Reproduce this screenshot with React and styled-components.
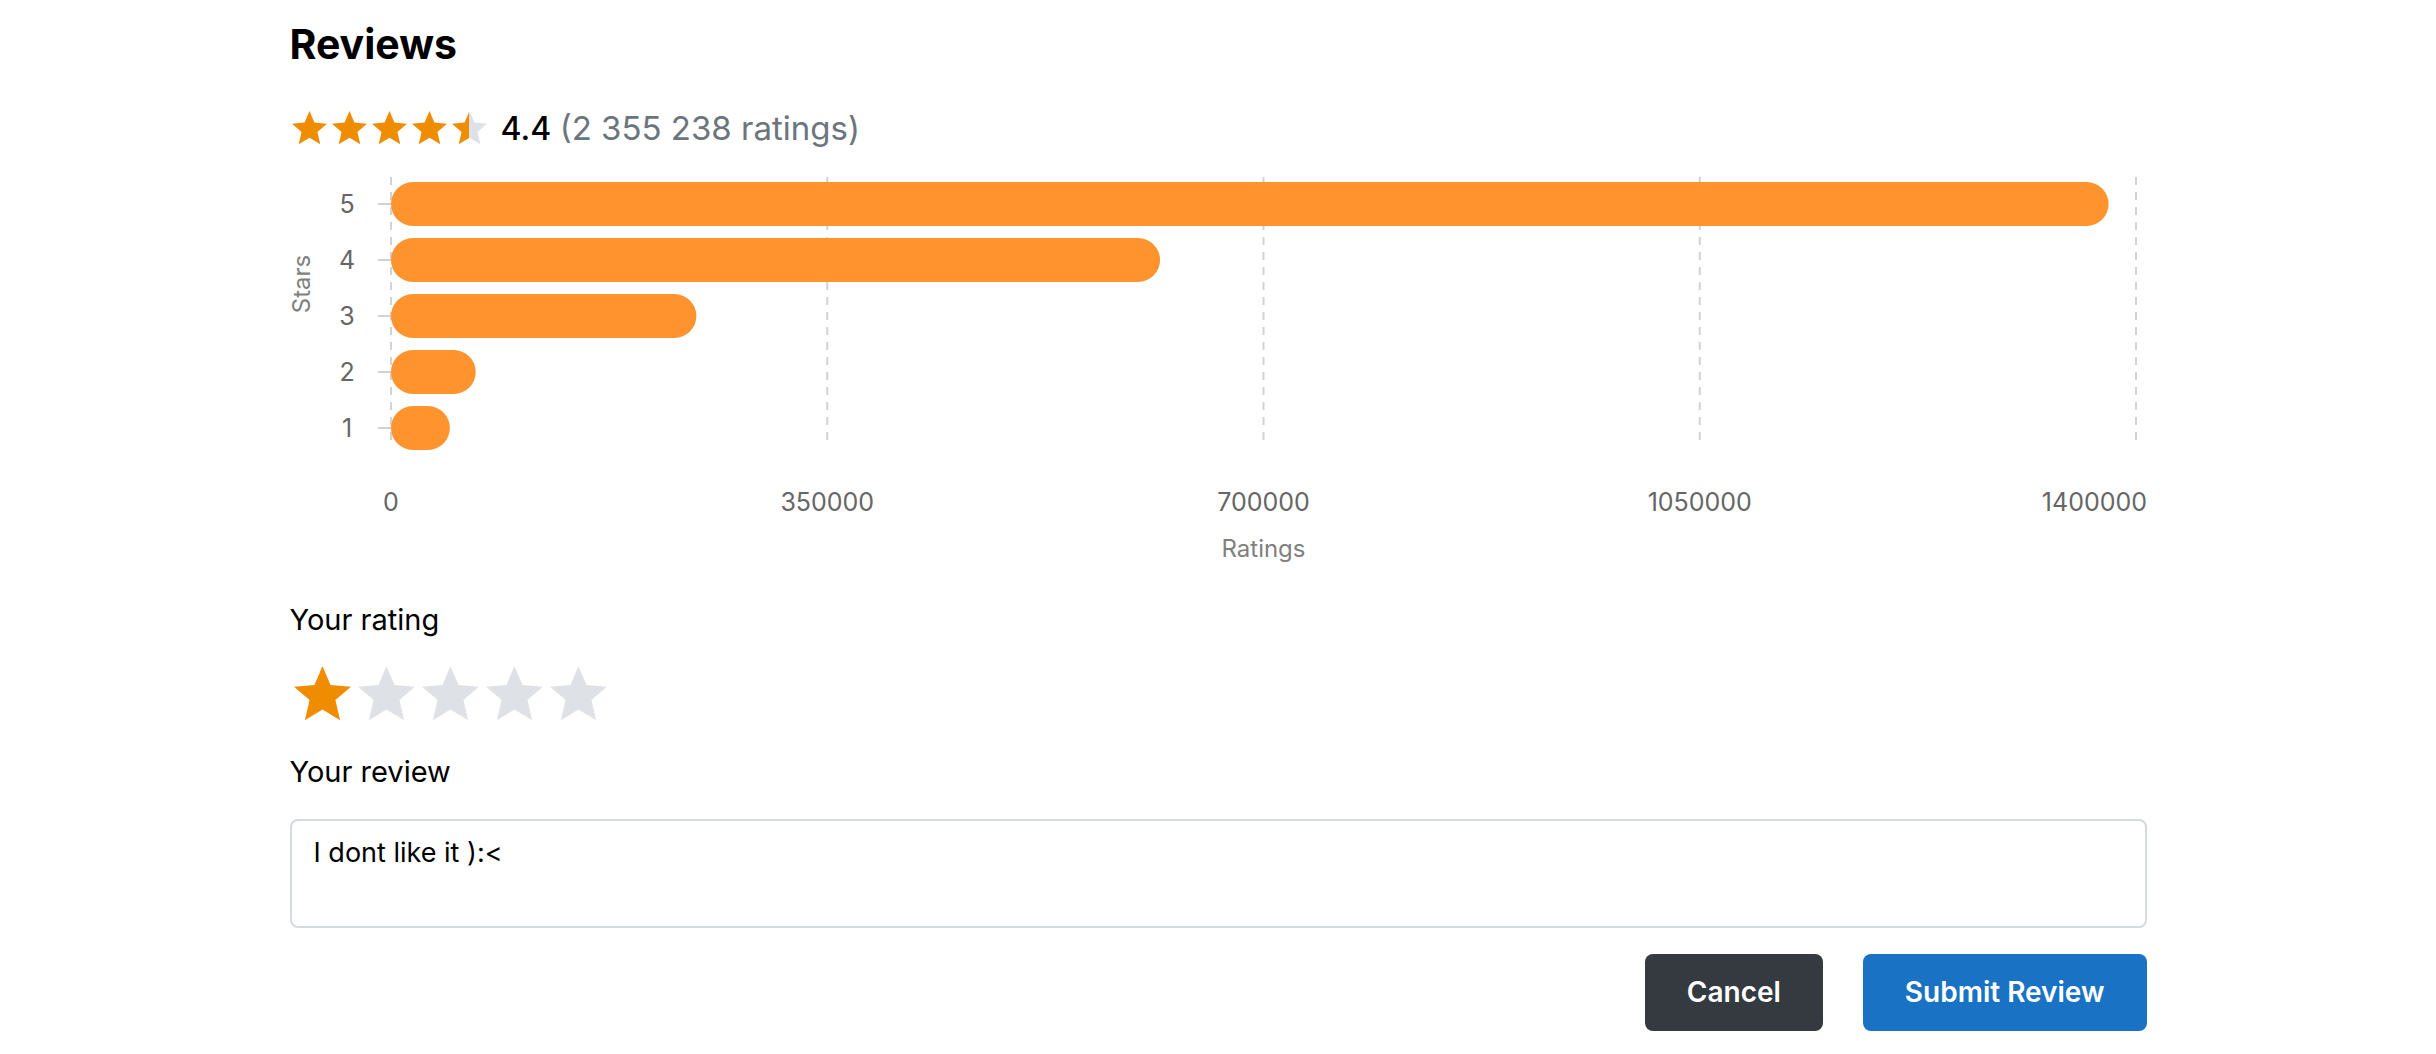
import React from "react";
import styled, { createGlobalStyle } from "styled-components";

// Reviews block: summary, distribution chart, and the review form

const ON = "#f08c00";
const OFF = "#dee2e6";
const BAR = "#ff942e";
const STAR_PATH =
  "M12 17.27L18.18 21l-1.64-7.03L22 9.24l-7.19-.61L12 2 9.19 8.63 2 9.24l5.46 4.73L5.82 21z";

const ratings = [
  { stars: 5, count: 1378000 },
  { stars: 4, count: 617000 },
  { stars: 3, count: 245000 },
  { stars: 2, count: 68000 },
  { stars: 1, count: 47238 },
];

const GlobalStyle = createGlobalStyle`
  body {
    margin: 0;
    background: #fff;
    color: #000;
    font-family: Inter, "Open Sans", sans-serif;
  }
`;

const Page = styled.section`
  width: 1857px;
  margin: 0 auto;
  padding-top: 20px;
  display: flex;
  flex-direction: column;
`;

const Title = styled.h2`
  margin: 0;
  font-size: 41px;
  line-height: 48px;
  font-weight: 700;
`;

const Summary = styled.div`
  display: flex;
  align-items: center;
  height: 40px;
  margin-top: 40px;
  gap: 14px;
`;

const StarRow = styled.div`
  display: flex;
  align-items: center;
  gap: ${(p) => p.$gap}px;
  margin-top: ${(p) => p.$top || 0}px;
  padding-left: ${(p) => p.$indent || 0}px;
`;

const Score = styled.span`
  font-size: 32px;
  font-weight: 500;
  line-height: 40px;
`;

const Count = styled.span`
  font-size: 33px;
  line-height: 40px;
  color: #6c757d;
  margin-left: 4px;
`;

const ChartSvg = styled.svg`
  display: block;
  overflow: visible;
  font-family: Inter, "Open Sans", sans-serif;

  .grid {
    stroke: #cfd3d8;
    stroke-width: 2;
    stroke-dasharray: 8 7;
  }
  .tick {
    stroke: #cfd3d8;
    stroke-width: 2;
  }
  .label {
    fill: #666;
    font-size: 25px;
  }
  .title {
    fill: #808080;
    font-size: 24px;
  }
`;

const Label = styled.div`
  font-size: 29px;
  line-height: 40px;
  margin-top: ${(p) => p.$top}px;
`;

const ReviewBox = styled.textarea`
  box-sizing: border-box;
  margin-top: 27px;
  width: 100%;
  height: 109px;
  padding: 12px 22px;
  border: 2px solid #d6dade;
  border-radius: 8px;
  font-family: Inter, "Open Sans", sans-serif;
  font-size: 27px;
  line-height: 40px;
  color: #000;
  resize: none;
  outline: none;
`;

const Actions = styled.div`
  display: flex;
  justify-content: flex-end;
  gap: 40px;
  margin-top: 26px;
`;

const Button = styled.button`
  height: 77px;
  padding: 0 42px;
  border: none;
  border-radius: 8px;
  background: ${(p) => (p.$primary ? "#1a72c4" : "#343a40")};
  color: #fff;
  font-family: Inter, "Open Sans", sans-serif;
  font-size: 28px;
  font-weight: 600;
  cursor: pointer;
`;

function Star({ width, fill, id }) {
  const partial = fill > 0 && fill < 1;
  const color = partial ? `url(#${id})` : fill >= 1 ? ON : OFF;
  return (
    <svg width={width} height={(width * 19.27) / 20} viewBox="2 2 20 19.27">
      {partial && (
        <defs>
          <linearGradient id={id}>
            <stop offset={fill} stopColor={ON} />
            <stop offset={fill} stopColor={OFF} />
          </linearGradient>
        </defs>
      )}
      <path d={STAR_PATH} fill={color} />
    </svg>
  );
}

function Stars({ value, width, gap, top, indent, name }) {
  return (
    <StarRow $gap={gap} $top={top} $indent={indent}>
      {[0, 1, 2, 3, 4].map((i) => (
        <Star
          key={i}
          width={width}
          id={`${name}-${i}`}
          fill={Math.max(0, Math.min(1, value - i))}
        />
      ))}
    </StarRow>
  );
}

function Chart() {
  const x0 = 101;
  const width = 1857;
  const max = 1400000;
  const span = 1745;
  const ticks = [0, 350000, 700000, 1050000, 1400000];
  const xOf = (v) => x0 + (v / max) * span;

  return (
    <ChartSvg width={width} height="422">
      {ticks.map((t) => (
        <line key={t} className="grid" x1={xOf(t)} x2={xOf(t)} y1="29" y2="299" />
      ))}
      {ratings.map((r, i) => {
        const cy = 56 + i * 56;
        return (
          <g key={r.stars}>
            <line className="tick" x1="88" x2={x0} y1={cy} y2={cy} />
            <text className="label" x="57" y={cy} textAnchor="middle" dominantBaseline="central">
              {r.stars}
            </text>
            <rect x={x0} y={cy - 22} height="44" width={xOf(r.count) - x0} rx="22" fill={BAR} />
          </g>
        );
      })}
      <text
        className="title"
        x="11"
        y="136"
        textAnchor="middle"
        dominantBaseline="central"
        transform="rotate(-90 11 136)"
      >
        Stars
      </text>
      {ticks.map((t) => {
        // last label is pulled inside the chart edge
        const last = t === max;
        return (
          <text
            key={t}
            className="label"
            x={last ? width : xOf(t)}
            y="354"
            textAnchor={last ? "end" : "middle"}
            dominantBaseline="central"
          >
            {t}
          </text>
        );
      })}
      <text className="title" x={xOf(700000)} y="400" textAnchor="middle" dominantBaseline="central">
        Ratings
      </text>
    </ChartSvg>
  );
}

export default function App() {
  return (
    <Page>
      <GlobalStyle />
      <Title>Reviews</Title>
      <Summary>
        <Stars value={4.5} width={35} gap={5} indent={2} name="avg" />
        <span>
          <Score>4.4</Score> <Count>(2 355 238 ratings)</Count>
        </span>
      </Summary>
      <Chart />
      <Label $top={30}>Your rating</Label>
      <Stars value={1} width={57} gap={7} top={26} indent={4} name="mine" />
      <Label $top={31}>Your review</Label>
      <ReviewBox defaultValue="I dont like it ):<" />
      <Actions>
        <Button>Cancel</Button>
        <Button $primary>Submit Review</Button>
      </Actions>
    </Page>
  );
}
